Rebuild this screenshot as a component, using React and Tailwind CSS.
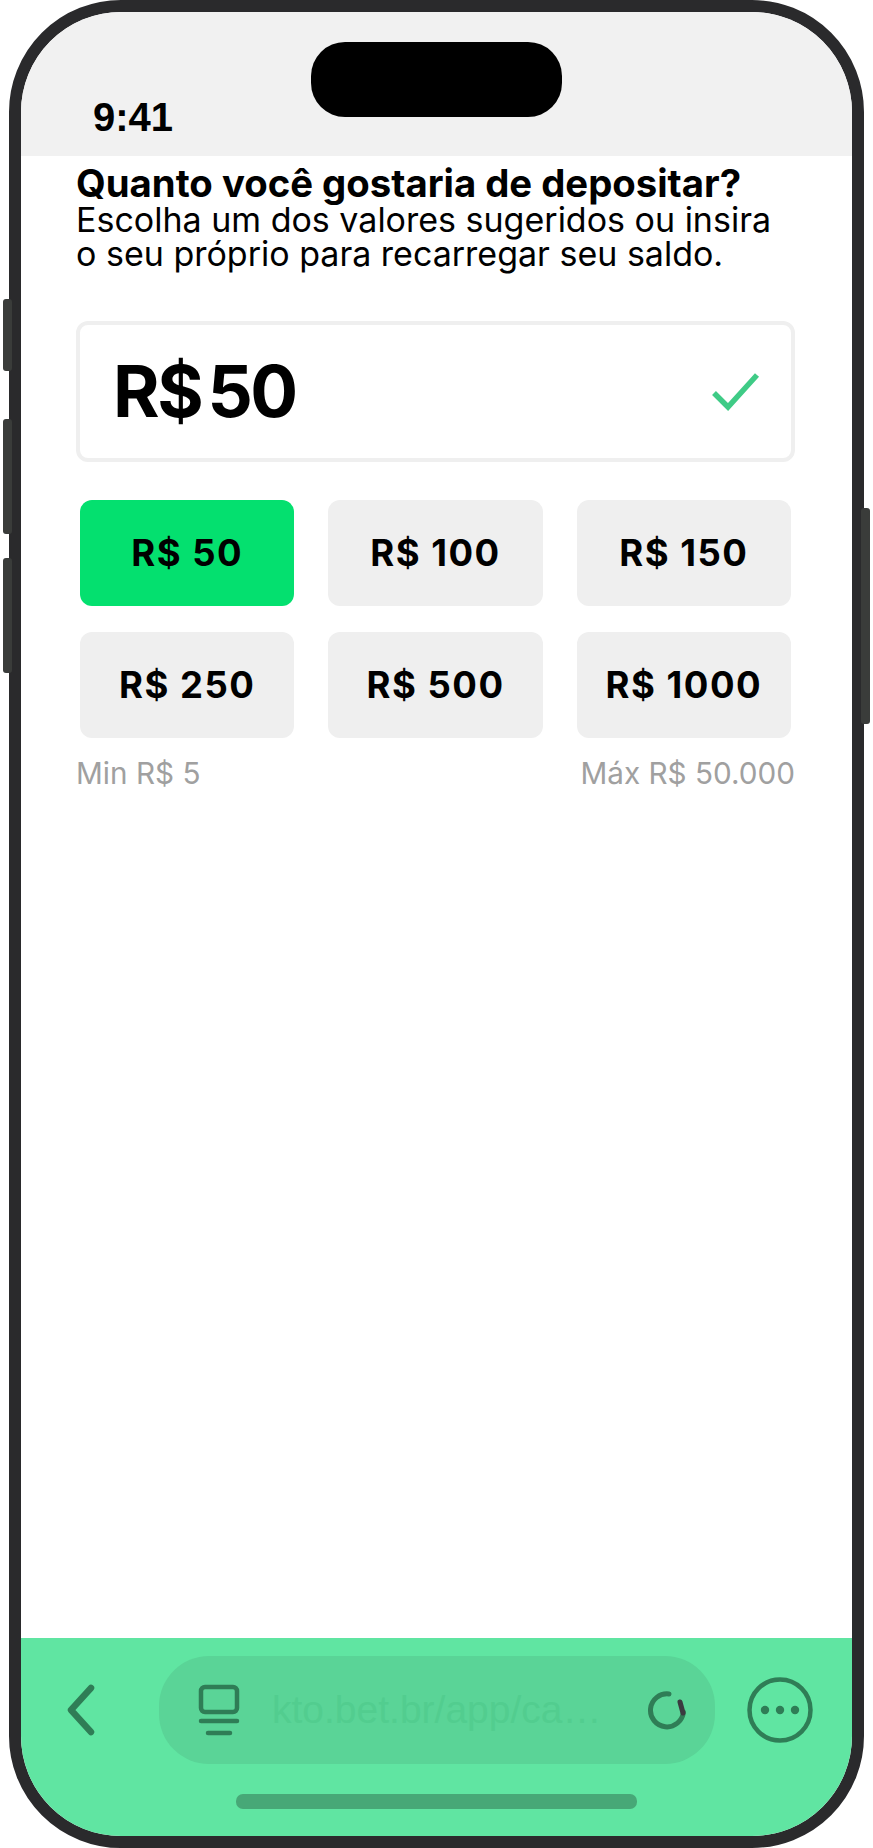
const amounts = ['R$ 50', 'R$ 100', 'R$ 150', 'R$ 250', 'R$ 500', 'R$ 1000'];

const SideButton = ({ className }) => (
  <div className={`absolute w-[9px] rounded-[3px] bg-[#3a3c3a] ${className}`} />
);

const BackIcon = () => (
  <svg width="36" height="60" viewBox="0 0 36 60" fill="none" stroke="#2f7d56" strokeWidth="6.5" strokeLinecap="round" strokeLinejoin="round">
    <path d="M29 8 L9 30 L29 52" />
  </svg>
);

const TabsIcon = () => (
  <svg width="44" height="54" viewBox="0 0 44 54" fill="none" stroke="#2f7d56" strokeLinecap="round">
    <rect x="4" y="4" width="36" height="25" rx="4" strokeWidth="4.5" />
    <path d="M4 38 H40" strokeWidth="4.5" />
    <path d="M11 50 H33" strokeWidth="4.5" />
  </svg>
);

const LoaderIcon = () => (
  <svg width="40" height="40" viewBox="0 0 40 40" fill="none" strokeLinecap="round" strokeWidth="5">
    <path d="M22 4 A16.5 16.5 0 1 0 36.4 22" stroke="#2f7d56" />
    <path d="M33 12 L36 23" stroke="#3b3a40" />
  </svg>
);

const MoreIcon = () => (
  <svg width="68" height="68" viewBox="0 0 68 68" fill="none">
    <circle cx="34" cy="34" r="30.5" stroke="#2f7d56" strokeWidth="4.5" />
    <circle cx="19" cy="34" r="4.2" fill="#2f7d56" />
    <circle cx="34" cy="34" r="4.2" fill="#2f7d56" />
    <circle cx="49" cy="34" r="4.2" fill="#2f7d56" />
  </svg>
);

export default function App() {
  return (
    <div className="w-[873px] h-[1848px] bg-white overflow-hidden font-['Inter',sans-serif] pl-[9px]">
      <div className="relative w-[855px] h-[1848px]">
        <SideButton className="-left-[6px] top-[299px] h-[72px]" />
        <SideButton className="-left-[6px] top-[419px] h-[115px]" />
        <SideButton className="-left-[6px] top-[558px] h-[115px]" />
        <SideButton className="left-[852px] top-[508px] h-[216px]" />

        <div className="w-full h-full border-[12px] border-[#2a2a2c] rounded-[112px] overflow-hidden flex flex-col bg-white">
          <div className="relative h-[144px] shrink-0 bg-[#f1f1f1]">
            <div className="absolute left-[290px] top-[30px] w-[251px] h-[75px] rounded-[34px] bg-black" />
            <div className="absolute left-[72px] top-[81px] text-[40px] leading-[48px] font-bold text-black font-['Liberation_Sans',sans-serif]">9:41</div>
          </div>

          <div className="flex-1 pl-[55px] pr-[57px] pt-[7px] text-black">
            <h1 className="text-[38.3px] leading-[40px] font-bold whitespace-nowrap">Quanto você gostaria de depositar?</h1>
            <p className="text-[34px] leading-[34px] font-normal whitespace-pre-line">{'Escolha um dos valores sugeridos ou insira\no seu próprio para recarregar seu saldo.'}</p>

            <div className="mt-[50px] h-[141px] border-4 border-[#efefef] rounded-[12px] flex items-center justify-between pl-[33px] pr-[31px]">
              <span className="text-[71px] font-bold leading-none tracking-[-2.5px] [word-spacing:-8px]">R$ 50</span>
              <svg width="48" height="38" viewBox="0 0 48 38" fill="none" stroke="#3fcb86" strokeWidth="5.5">
                <path d="M2 20 L16 34 L45 2" />
              </svg>
            </div>

            <div className="mt-[38px] mx-1 grid grid-cols-3 gap-x-[34px] gap-y-[26px]">
              {amounts.map((amount, i) => (
                <button
                  key={amount}
                  type="button"
                  className={`h-[106px] rounded-[12px] text-[36.5px] font-bold tracking-[1.5px] text-black ${i === 0 ? 'bg-[#04e06f]' : 'bg-[#efefef]'}`}
                >
                  {amount}
                </button>
              ))}
            </div>

            <div className="mt-[18px] flex justify-between text-[29.7px] leading-[34px] text-[#a0a0a0]">
              <span>Min R$ 5</span>
              <span>Máx R$ 50.000</span>
            </div>
          </div>

          <div className="h-[198px] shrink-0 bg-[#60e5a2] pt-[18px] flex flex-col">
            <div className="flex items-center pl-[41px]">
              <BackIcon />
              <div className="ml-[61px] w-[556px] h-[108px] rounded-[50px] bg-[#5ad497] flex items-center pl-[38px] pr-[28px]">
                <TabsIcon />
                <span className="ml-[31px] flex-1 text-[39px] text-[#52cd8f] font-['Liberation_Sans',sans-serif]">kto.bet.br/app/ca…</span>
                <LoaderIcon />
              </div>
              <div className="ml-[31px]">
                <MoreIcon />
              </div>
            </div>
            <div className="mt-[30px] ml-[215px] w-[401px] h-[15px] rounded-[7px] bg-[#47a877]" />
          </div>
        </div>
      </div>
    </div>
  );
}
